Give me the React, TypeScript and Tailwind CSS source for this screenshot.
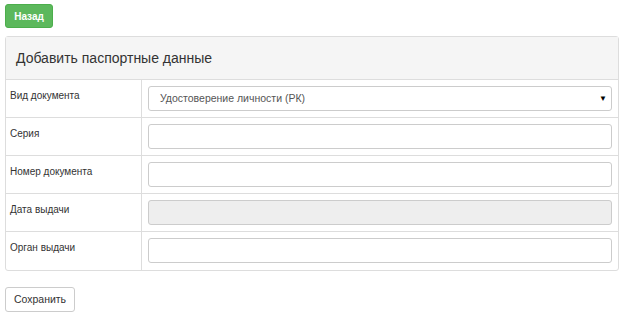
import React from 'react';

const rows = [
  { label: 'Вид документа', kind: 'select' },
  { label: 'Серия', kind: 'input' },
  { label: 'Номер документа', kind: 'input' },
  { label: 'Дата выдачи', kind: 'disabled' },
  { label: 'Орган выдачи', kind: 'input' },
];

export default function App() {
  return (
    <div className="w-[623px] h-[318px] bg-white px-[5px] pt-[4px] font-['Liberation_Sans',Arial,sans-serif] text-[#333]">
      <button className="block h-[24px] w-[48px] rounded-[3px] bg-[#5cb85c] border border-[#4cae4c] text-white text-[10px] font-bold">
        Назад
      </button>

      <div className="mt-[8px] w-[614px] border border-[#ddd] rounded-[3px] bg-white">
        <div className="h-[43px] bg-[#f5f5f5] border-b border-[#ddd] px-[10px] flex items-center text-[14px] text-[#333]">
          Добавить паспортные данные
        </div>
        {rows.map((r, i) => (
          <div
            key={r.label}
            className={`grid grid-cols-[136px_1fr] h-[38px] ${i < rows.length - 1 ? 'border-b border-[#ddd]' : ''}`}
          >
            <div className="border-r border-[#ddd] px-[4px] pt-[8px] text-[10px] text-[#333]">{r.label}</div>
            <div className="px-[6px] pt-[6px]">
              {r.kind === 'select' ? (
                <div className="h-[25px] border border-[#ccc] rounded-[3px] bg-white flex items-center justify-between pl-[11px] pr-[4px] text-[10.5px] text-[#555]">
                  <span>Удостоверение личности (РК)</span>
                  <span className="text-[8px] text-black">▼</span>
                </div>
              ) : (
                <div
                  className={`h-[25px] border border-[#ccc] rounded-[3px] ${r.kind === 'disabled' ? 'bg-[#eee]' : 'bg-white'}`}
                />
              )}
            </div>
          </div>
        ))}
      </div>

      <button className="block mt-[16px] h-[25px] w-[70px] rounded-[3px] bg-white border border-[#ccc] text-[10.5px] text-[#333]">
        Сохранить
      </button>
    </div>
  );
}
